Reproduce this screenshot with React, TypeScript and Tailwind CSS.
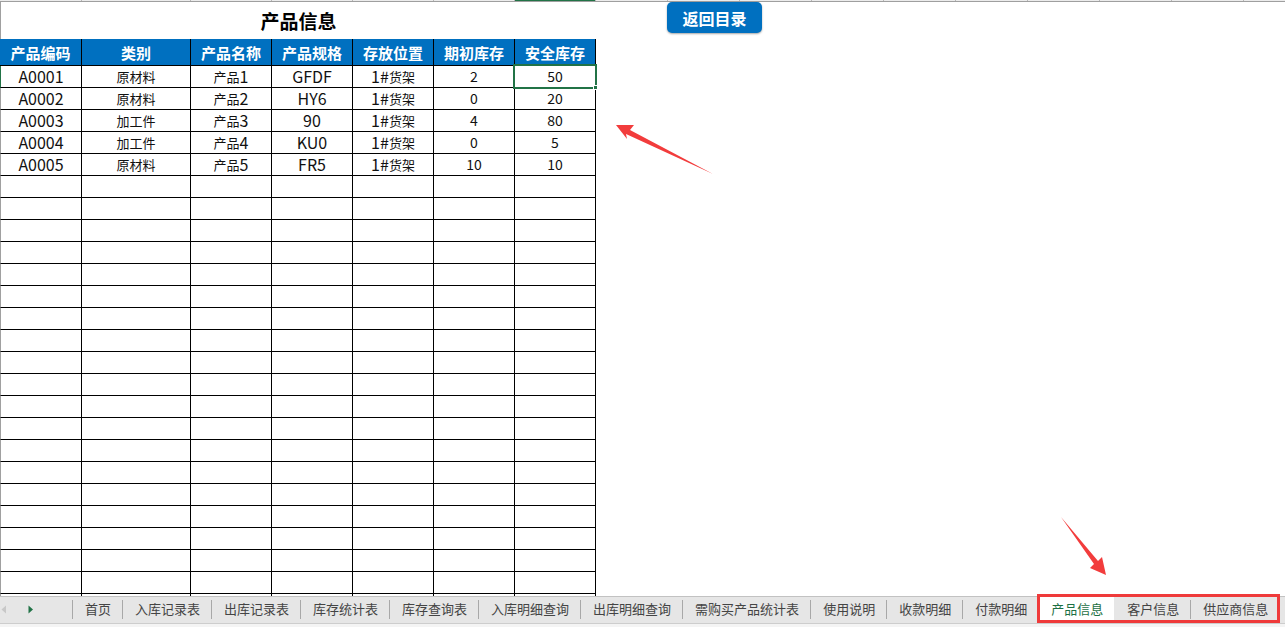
const COL_W = ["w-[82px]", "w-[109px]", "w-[81px]", "w-[81px]", "w-[81px]", "w-[81px]", "w-[81px]"];

const HEADERS = ["产品编码", "类别", "产品名称", "产品规格", "存放位置", "期初库存", "安全库存"];

const ROWS = [
  ["A0001", "原材料", "产品1", "GFDF", "1#货架", "2", "50"],
  ["A0002", "原材料", "产品2", "HY6", "1#货架", "0", "20"],
  ["A0003", "加工件", "产品3", "90", "1#货架", "4", "80"],
  ["A0004", "加工件", "产品4", "KU0", "1#货架", "0", "5"],
  ["A0005", "原材料", "产品5", "FR5", "1#货架", "10", "10"],
];

const TABS = [
  "首页",
  "入库记录表",
  "出库记录表",
  "库存统计表",
  "库存查询表",
  "入库明细查询",
  "出库明细查询",
  "需购买产品统计表",
  "使用说明",
  "收款明细",
  "付款明细",
  "产品信息",
  "客户信息",
  "供应商信息",
];
const ACTIVE = "产品信息";

// split text into CJK / latin runs, the sheet renders them at different sizes
function CellText({ text, small }: { text: string; small?: boolean }) {
  const parts = text.split(/([\u4e00-\u9fff]+)/).filter(Boolean);
  return (
    <span className="inline-flex items-center whitespace-nowrap -mt-[1px]">
      {parts.map((p, i) =>
        /[\u4e00-\u9fff]/.test(p) ? (
          <span key={i} className="text-[13px] leading-none">
            {p}
          </span>
        ) : (
          <span key={i} className={small ? "text-[14px] leading-none" : "text-[16px] leading-none"}>
            {p}
          </span>
        )
      )}
    </span>
  );
}

function TopStrip() {
  const widths = [...COL_W, "w-[72px]", "w-[72px]", "w-[72px]", "w-[72px]", "w-[72px]", "w-[72px]", "w-[72px]", "w-[72px]", "w-[72px]"];
  return (
    <div className="h-[2px] shrink-0 flex border-b border-[#9f9f9f] bg-[#ececec]">
      {widths.map((w, i) => (
        <div
          key={i}
          className={`${w} shrink-0 border-r border-[#b8b8b8] ${i === 6 ? "bg-[#217346]" : ""}`}
        />
      ))}
    </div>
  );
}

function Sheet() {
  const empties = Array.from({ length: 22 });
  return (
    <div className="flex-1 overflow-hidden flex flex-col">
      {/* title (merged cell) */}
      <div className="h-[37px] shrink-0 w-[596px] flex items-center justify-center border-l border-[#a0a0a0]">
        <span className="text-[19px] font-bold text-black leading-none -mt-[1px]">产品信息</span>
      </div>

      {/* header */}
      <div className="h-[27px] shrink-0 flex">
        {HEADERS.map((h, i) => (
          <div
            key={h}
            className={`${COL_W[i]} shrink-0 h-full flex items-center justify-center bg-[#0070c0] border-r border-b border-black text-white font-bold text-[15px] leading-none`}
          >
            {h}
          </div>
        ))}
      </div>

      {/* data rows */}
      {ROWS.map((row, r) => (
        <div key={r} className="h-[22px] shrink-0 flex">
          {row.map((v, i) => (
            <div
              key={i}
              className={`${COL_W[i]} shrink-0 h-full flex items-center justify-center border-r border-b border-black text-[#111] ${
                i === 0 ? (r === 0 ? "border-l border-l-[#217346]" : "border-l border-l-[#a0a0a0]") : ""
              }`}
            >
              <CellText text={v} small={i >= 5} />
            </div>
          ))}
        </div>
      ))}

      {/* empty rows */}
      {empties.map((_, r) => (
        <div key={`e${r}`} className="h-[22px] shrink-0 flex">
          {COL_W.map((w, i) => (
            <div
              key={i}
              className={`${w} shrink-0 h-full border-r border-b border-black ${i === 0 ? "border-l border-l-[#a0a0a0]" : ""}`}
            />
          ))}
        </div>
      ))}
    </div>
  );
}

function TabBar() {
  return (
    <div className="h-[31px] shrink-0 flex flex-col">
      <div className="h-[27px] flex items-stretch bg-[#e6e6e6] border-t border-[#c2c2c2]">
        <div className="w-[72px] shrink-0 flex items-center pb-[2px]">
          <svg width="6" height="9" viewBox="0 0 6 9" className="ml-[1px]">
            <path d="M5 0.5 L0.5 4.5 L5 8.5 Z" fill="#c8c8c8" />
          </svg>
          <svg width="6" height="9" viewBox="0 0 6 9" className="ml-[21px]">
            <path d="M0.5 0.5 L5 4.5 L0.5 8.5 Z" fill="#217346" />
          </svg>
        </div>
        {TABS.map((t, i) => {
          const active = t === ACTIVE;
          const prevActive = i > 0 && TABS[i - 1] === ACTIVE;
          return (
            <div key={t} className="flex items-stretch shrink-0">
              <div className="w-px shrink-0 flex items-center">
                <div className={`w-px h-[19px] -mt-[1px] ${active || prevActive ? "" : "bg-[#a8a8a8]"}`} />
              </div>
              {active ? (
                <div className="pl-[12px] pr-[11px] bg-white flex items-center border-b-2 border-[#217346] mb-[1px]">
                  <span className="text-[13px] leading-none text-[#1d7044]">{t}</span>
                </div>
              ) : (
                <div className="pl-[12px] pr-[11px] flex items-center pb-[3px]">
                  <span className="text-[13px] leading-none text-[#444444]">{t}</span>
                </div>
              )}
            </div>
          );
        })}
      </div>
      <div className="flex-1 bg-[#f4f4f4] border-t border-[#cdcdcd]" />
    </div>
  );
}

export default function App() {
  return (
    <div className="relative w-[1285px] h-[627px] overflow-hidden bg-white flex flex-col font-['Noto_Sans_CJK_SC',sans-serif]">
      <TopStrip />
      <Sheet />
      <TabBar />

      {/* floating button shape */}
      <button className="absolute left-[667px] top-[2px] w-[95px] h-[31px] rounded-[5px] bg-[#0070c0] text-white font-bold text-[16px] leading-none shadow-[0_1px_2px_rgba(0,0,0,0.35)]">
        返回目录
      </button>

      {/* selected cell */}
      <div className="absolute left-[513px] top-[64px] w-[84px] h-[25px] border-2 border-[#217346] pointer-events-none" />
      <div className="absolute left-[593px] top-[85px] w-[5px] h-[5px] bg-[#217346] border border-white pointer-events-none" />

      {/* annotation box + arrows */}
      <div className="absolute left-[1037px] top-[594px] w-[243px] h-[29px] border-[3px] border-[#ef3a3a] pointer-events-none" />
      <svg className="absolute inset-0 pointer-events-none" width="1285" height="627" viewBox="0 0 1285 627">
        <polygon points="616,125 634,125 630,130 713,174 626,134 627,139" fill="#f23c3c" />
        <polygon points="1061,517 1098,561 1102,557 1106,575 1090,568 1094,564" fill="#f23c3c" />
      </svg>
    </div>
  );
}
